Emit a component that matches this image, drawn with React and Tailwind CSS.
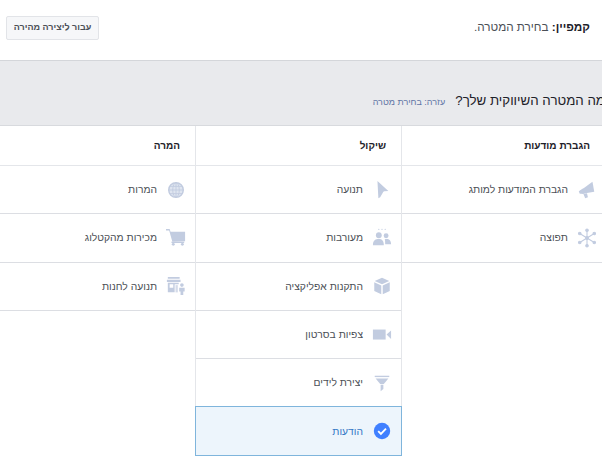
const iconColor = '#c2cce0';

const Megaphone = () => (
  <svg width="20" height="20" viewBox="0 0 22 22" fill={iconColor}>
    <path d="M17 2 L19 13 L6 15 L2 13 Z" />
    <path d="M2 12.5 L7 9 L8 15 L3 15 Z" />
    <path d="M7 15 L11 14.5 L12 19 L9 20 Z" />
  </svg>
);

const Burst = () => (
  <svg width="20" height="20" viewBox="0 0 22 22" fill={iconColor} stroke={iconColor} strokeWidth="1.2">
    <path d="M11 2 V20 M3 6 L19 16 M19 6 L3 16" />
    <circle cx="11" cy="11" r="1.6" />
    <circle cx="11" cy="2.5" r="1.4" />
    <circle cx="11" cy="19.5" r="1.4" />
    <circle cx="3" cy="6" r="1.4" />
    <circle cx="19" cy="6" r="1.4" />
    <circle cx="3" cy="16" r="1.4" />
    <circle cx="19" cy="16" r="1.4" />
  </svg>
);

const Cursor = () => (
  <svg width="20" height="20" viewBox="0 0 22 22" fill={iconColor}>
    <path d="M6 1 L18 12 L13.5 12.5 L12.5 13 L9 19 L7 20 Z" />
  </svg>
);

const People = () => (
  <svg width="20" height="20" viewBox="0 0 22 22" fill={iconColor}>
    <circle cx="7.5" cy="1.5" r="0.7" />
    <circle cx="11" cy="1.5" r="0.7" />
    <circle cx="14.5" cy="1.5" r="0.7" />
    <circle cx="7.5" cy="8" r="3.2" />
    <circle cx="15.5" cy="8.5" r="2.7" />
    <path d="M1 19 C1 13 4 12 7.5 12 C11 12 13 14 13 19 Z" />
    <path d="M14 12.5 C18 11.5 21 13 21 18 L14.5 18 C14.5 16 14.5 14 14 12.5 Z" />
  </svg>
);

const Box = () => (
  <svg width="20" height="20" viewBox="0 0 22 22" fill={iconColor}>
    <path d="M11 2 L19 5.5 L11 9 L3 5.5 Z" />
    <path d="M2.5 7 L10.2 10.5 V20 L2.5 16.5 Z" />
    <path d="M19.5 7 L11.8 10.5 V20 L19.5 16.5 Z" />
  </svg>
);

const Video = () => (
  <svg width="20" height="20" viewBox="0 0 22 22" fill={iconColor}>
    <rect x="1" y="5" width="14" height="11" />
    <path d="M16 10.5 L21 6 V15.5 Z" />
  </svg>
);

const Funnel = () => (
  <svg width="20" height="20" viewBox="0 0 22 22" fill={iconColor}>
    <path d="M3 3 H19 V4.5 H3 Z" />
    <path d="M4 6 H18 L13 12 H9 Z" />
    <path d="M9.5 13 H12.5 V17.5 L9.5 20 Z" />
  </svg>
);

const Check = () => (
  <svg width="20" height="20" viewBox="0 0 22 22">
    <circle cx="11" cy="11" r="9" fill="#4080ff" />
    <path d="M6.8 11.2 L9.8 14.2 L15.4 8.4" fill="none" stroke="#fff" strokeWidth="2" />
  </svg>
);

const Globe = () => (
  <svg width="20" height="20" viewBox="0 0 22 22" fill="none" stroke={iconColor}>
    <circle cx="11" cy="11" r="8" fill="#dfe5f0" strokeWidth="1.6" />
    <ellipse cx="11" cy="11" rx="3.6" ry="8" />
    <path d="M11 3 V19 M3 11 H19 M4 7 H18 M4 15 H18" />
  </svg>
);

const Cart = () => (
  <svg width="20" height="20" viewBox="0 0 22 22" fill={iconColor}>
    <path d="M0 1 H4 L5 4 H21 V14.5 L7 15 L3.5 2.8 H0 Z" />
    <circle cx="8" cy="18" r="1.6" />
    <circle cx="18" cy="18" r="1.6" />
    <rect x="6" y="15" width="14" height="1.5" />
  </svg>
);

const Store = () => (
  <svg width="20" height="20" viewBox="0 0 22 22" fill={iconColor}>
    <path d="M2 1 H15 V3 H2 Z M1 4 H16 V6.5 H1 Z" />
    <path d="M2 7.5 H14 V9 H4 V13 H8 V8.5 H9.5 V18 H2 Z" />
    <path d="M10.5 10 H13 V18 H10.5 Z" opacity="0.7" />
    <circle cx="17.5" cy="10" r="2" />
    <path d="M14.5 13 H20.5 V17 H19 V21 H16 V17 H14.5 Z" />
  </svg>
);

const columns = [
  {
    title: 'הגברת מודעות',
    width: 'w-[200px]',
    titlePad: 'pr-[12px]',
    rowPad: 'pr-[5px]',
    items: [
      { label: 'הגברת המודעות למותג', icon: Megaphone },
      { label: 'תפוצה', icon: Burst },
    ],
  },
  {
    title: 'שיקול',
    width: 'w-[207px] border-x border-[#e4e6ea]',
    titlePad: 'pr-[15px]',
    rowPad: 'pr-[9px]',
    items: [
      { label: 'תנועה', icon: Cursor },
      { label: 'מעורבות', icon: People },
      { label: 'התקנות אפליקציה', icon: Box },
      { label: 'צפיות בסרטון', icon: Video },
      { label: 'יצירת לידים', icon: Funnel },
      { label: 'הודעות', icon: Check, selected: true },
    ],
  },
  {
    title: 'המרה',
    width: 'w-[195px]',
    titlePad: 'pr-[15px]',
    rowPad: 'pr-[9px]',
    items: [
      { label: 'המרות', icon: Globe },
      { label: 'מכירות מהקטלוג', icon: Cart },
      { label: 'תנועה לחנות', icon: Store },
    ],
  },
];

const Row = ({ item, pad }) => {
  const Icon = item.icon;
  return (
    <div
      className={
        item.selected
          ? `relative h-[50px] -mx-px -mt-px flex items-center gap-[9px] bg-[#edf5fc] border border-[#7fb5dc] text-[#3578c6] ${pad}`
          : `h-[48.3px] flex items-center gap-[9px] border-b border-[#dcdee3] text-[#4b4f56] ${pad}`
      }
    >
      <Icon />
      <span className="text-[10.3px]">{item.label}</span>
    </div>
  );
};

export default function App() {
  return (
    <div dir="rtl" className="w-[602px] h-[459px] overflow-hidden bg-white font-['Liberation_Sans',sans-serif]">
      <div className="h-[61px] pt-[16px] pl-[6px] pr-[12px] flex items-start justify-between border-b border-[#d4d6da]">
        <div className="text-[11.7px] leading-[22px] text-[#4b4f56]">
          <b className="text-[#1d2129]">קמפיין:</b> בחירת המטרה.
        </div>
        <button className="w-[93px] h-[24px] rounded-[2px] border border-[#e2e4e8] bg-[#f6f7f9] text-[9px] font-bold text-[#4b4f56]">
          עבור ליצירה מהירה
        </button>
      </div>

      <div className="h-[65px] bg-[#e9eaed] border-b border-[#d8dade] pt-[28px] flex items-baseline gap-[10px] mr-[-3px]">
        <span className="text-[13.3px] leading-[24px] whitespace-nowrap text-[#1d2129]">מה המטרה השיווקית שלך?</span>
        <span className="text-[9px] text-[#5f75a5] whitespace-nowrap">עזרה: בחירת מטרה</span>
      </div>

      <div className="flex items-start">
        {columns.map((col) => (
          <div key={col.title} className={col.width}>
            <div className={`h-[40px] flex items-center border-b border-[#e4e6ea] text-[10px] font-bold text-[#1d2129] ${col.titlePad}`}>
              {col.title}
            </div>
            {col.items.map((item) => (
              <Row key={item.label} item={item} pad={col.rowPad} />
            ))}
          </div>
        ))}
      </div>
    </div>
  );
}
